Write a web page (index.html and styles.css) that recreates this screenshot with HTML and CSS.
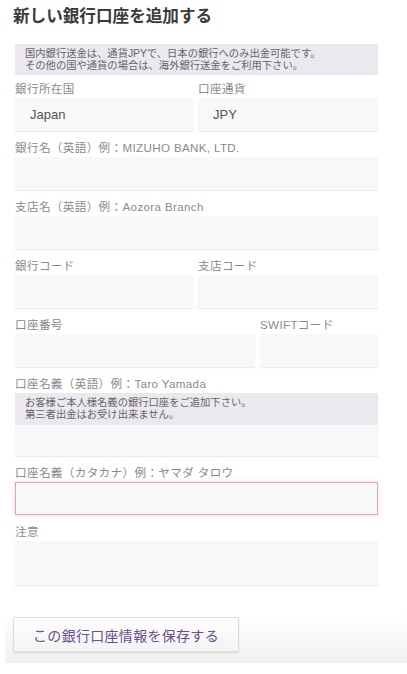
FILE: index.html
```html
<!DOCTYPE html>
<html lang="ja">
<head>
    <meta charset="UTF-8">
    <meta name="viewport" content="width=device-width, initial-scale=1.0">
    <title>新しい銀行口座を追加する</title>
    <link rel="stylesheet" href="styles.css">
</head>
<body>
    <div class="page">
        <h1 class="title">新しい銀行口座を追加する</h1>
        <form class="bank-form" id="bankForm">
            <div class="notice notice-top">
                国内銀行送金は、通貨JPYで、日本の銀行へのみ出金可能です。<br>
                その他の国や通貨の場合は、海外銀行送金をご利用下さい。
            </div>

            <div class="row row-half">
                <div class="field field-first">
                    <label for="country">銀行所在国</label>
                    <div class="input value" id="country">Japan</div>
                </div>
                <div class="field field-first">
                    <label for="currency">口座通貨</label>
                    <div class="input value" id="currency">JPY</div>
                </div>
            </div>

            <div class="field">
                <label for="bankName">銀行名（英語）例：MIZUHO BANK, LTD.</label>
                <input class="input" type="text" id="bankName">
            </div>

            <div class="field">
                <label for="branchName">支店名（英語）例：Aozora Branch</label>
                <input class="input" type="text" id="branchName">
            </div>

            <div class="row row-half">
                <div class="field">
                    <label for="bankCode">銀行コード</label>
                    <input class="input" type="text" id="bankCode">
                </div>
                <div class="field">
                    <label for="branchCode">支店コード</label>
                    <input class="input" type="text" id="branchCode">
                </div>
            </div>

            <div class="row row-wide">
                <div class="field">
                    <label for="accountNo">口座番号</label>
                    <input class="input" type="text" id="accountNo">
                </div>
                <div class="field">
                    <label for="swift">SWIFTコード</label>
                    <input class="input" type="text" id="swift">
                </div>
            </div>

            <div class="field">
                <label for="holder">口座名義（英語）例：Taro Yamada</label>
                <div class="notice notice-field">
                    お客様ご本人様名義の銀行口座をご追加下さい。<br>
                    第三者出金はお受け出来ません。
                </div>
                <input class="input input-short" type="text" id="holder">
            </div>

            <div class="field">
                <label for="holderKana">口座名義（カタカナ）例：ヤマダ タロウ</label>
                <input class="input input-error" type="text" id="holderKana">
            </div>

            <div class="field">
                <label for="note">注意</label>
                <textarea class="input input-note" id="note"></textarea>
            </div>
        </form>

        <div class="footer">
            <button type="submit" form="bankForm" class="save-btn">この銀行口座情報を保存する</button>
        </div>
    </div>
</body>
</html>
```

FILE: styles.css
```css
body {
    margin: 0;
    padding: 0;
    background-color: #fff;
    font-family: "Liberation Sans", "Noto Sans CJK JP", sans-serif;
    color: #333;
}

.page {
    width: 407px;
}

.title {
    margin: 0;
    padding: 0 0 0 13px;
    height: 33px;
    line-height: 31px;
    font-family: "Noto Sans CJK JP", sans-serif;
    font-size: 16.6px;
    font-weight: 600;
    color: #3a3a3a;
}

.bank-form {
    width: 363px;
    margin: 11px 0 0 15px;
}

.notice {
    background-color: #ebe8ef;
    color: #666;
    font-family: "Liberation Sans", "Noto Sans CJK JP", sans-serif;
    font-size: 10.3px;
    line-height: 12px;
    padding: 4px 10px 3px;
}

.notice-top {
    height: 24px;
}

.notice-field {
    height: 25px;
}

.row {
    display: grid;
    gap: 5px;
}

.row-half {
    grid-template-columns: 178px 1fr;
}

.row-wide {
    grid-template-columns: 240px 1fr;
}

.field {
    margin-top: 8px;
}

.field-first {
    margin-top: 5px;
}

label {
    display: block;
    font-size: 11.6px;
    line-height: 18px;
    letter-spacing: 0.35px;
    color: #8a8a8a;
}

.input {
    display: block;
    width: 100%;
    height: 33px;
    margin: 0;
    padding: 0 15px;
    box-sizing: border-box;
    border: none;
    border-radius: 0;
    background-color: #f8f8f8;
    box-shadow: 0 1px 1px rgba(0, 0, 0, 0.07);
    font-family: "Liberation Sans", "Noto Sans CJK JP", sans-serif;
    font-size: 13px;
    color: #555;
    outline: none;
}

.value {
    line-height: 34px;
}

.input-short {
    height: 31px;
}

.input-error {
    border: 1px solid #e9a3aa;
    box-shadow: 0 0 4px rgba(232, 120, 132, 0.35);
}

.input-note {
    height: 44px;
    resize: none;
}

.footer {
    margin: 16px 0 0 5px;
    padding: 16px 0 11px 8px;
    background: linear-gradient(#fff 20%, #f0f0f0);
}

.save-btn {
    display: block;
    width: 226px;
    height: 35px;
    padding: 0;
    border: 1px solid #ddd;
    border-radius: 1px;
    background: linear-gradient(#fff, #f3f3f3);
    box-shadow: 0 1px 2px rgba(0, 0, 0, 0.12);
    font-family: "Noto Sans CJK JP", sans-serif;
    font-size: 14px;
    letter-spacing: 0.3px;
    color: #6a4d8c;
    cursor: pointer;
}
```
